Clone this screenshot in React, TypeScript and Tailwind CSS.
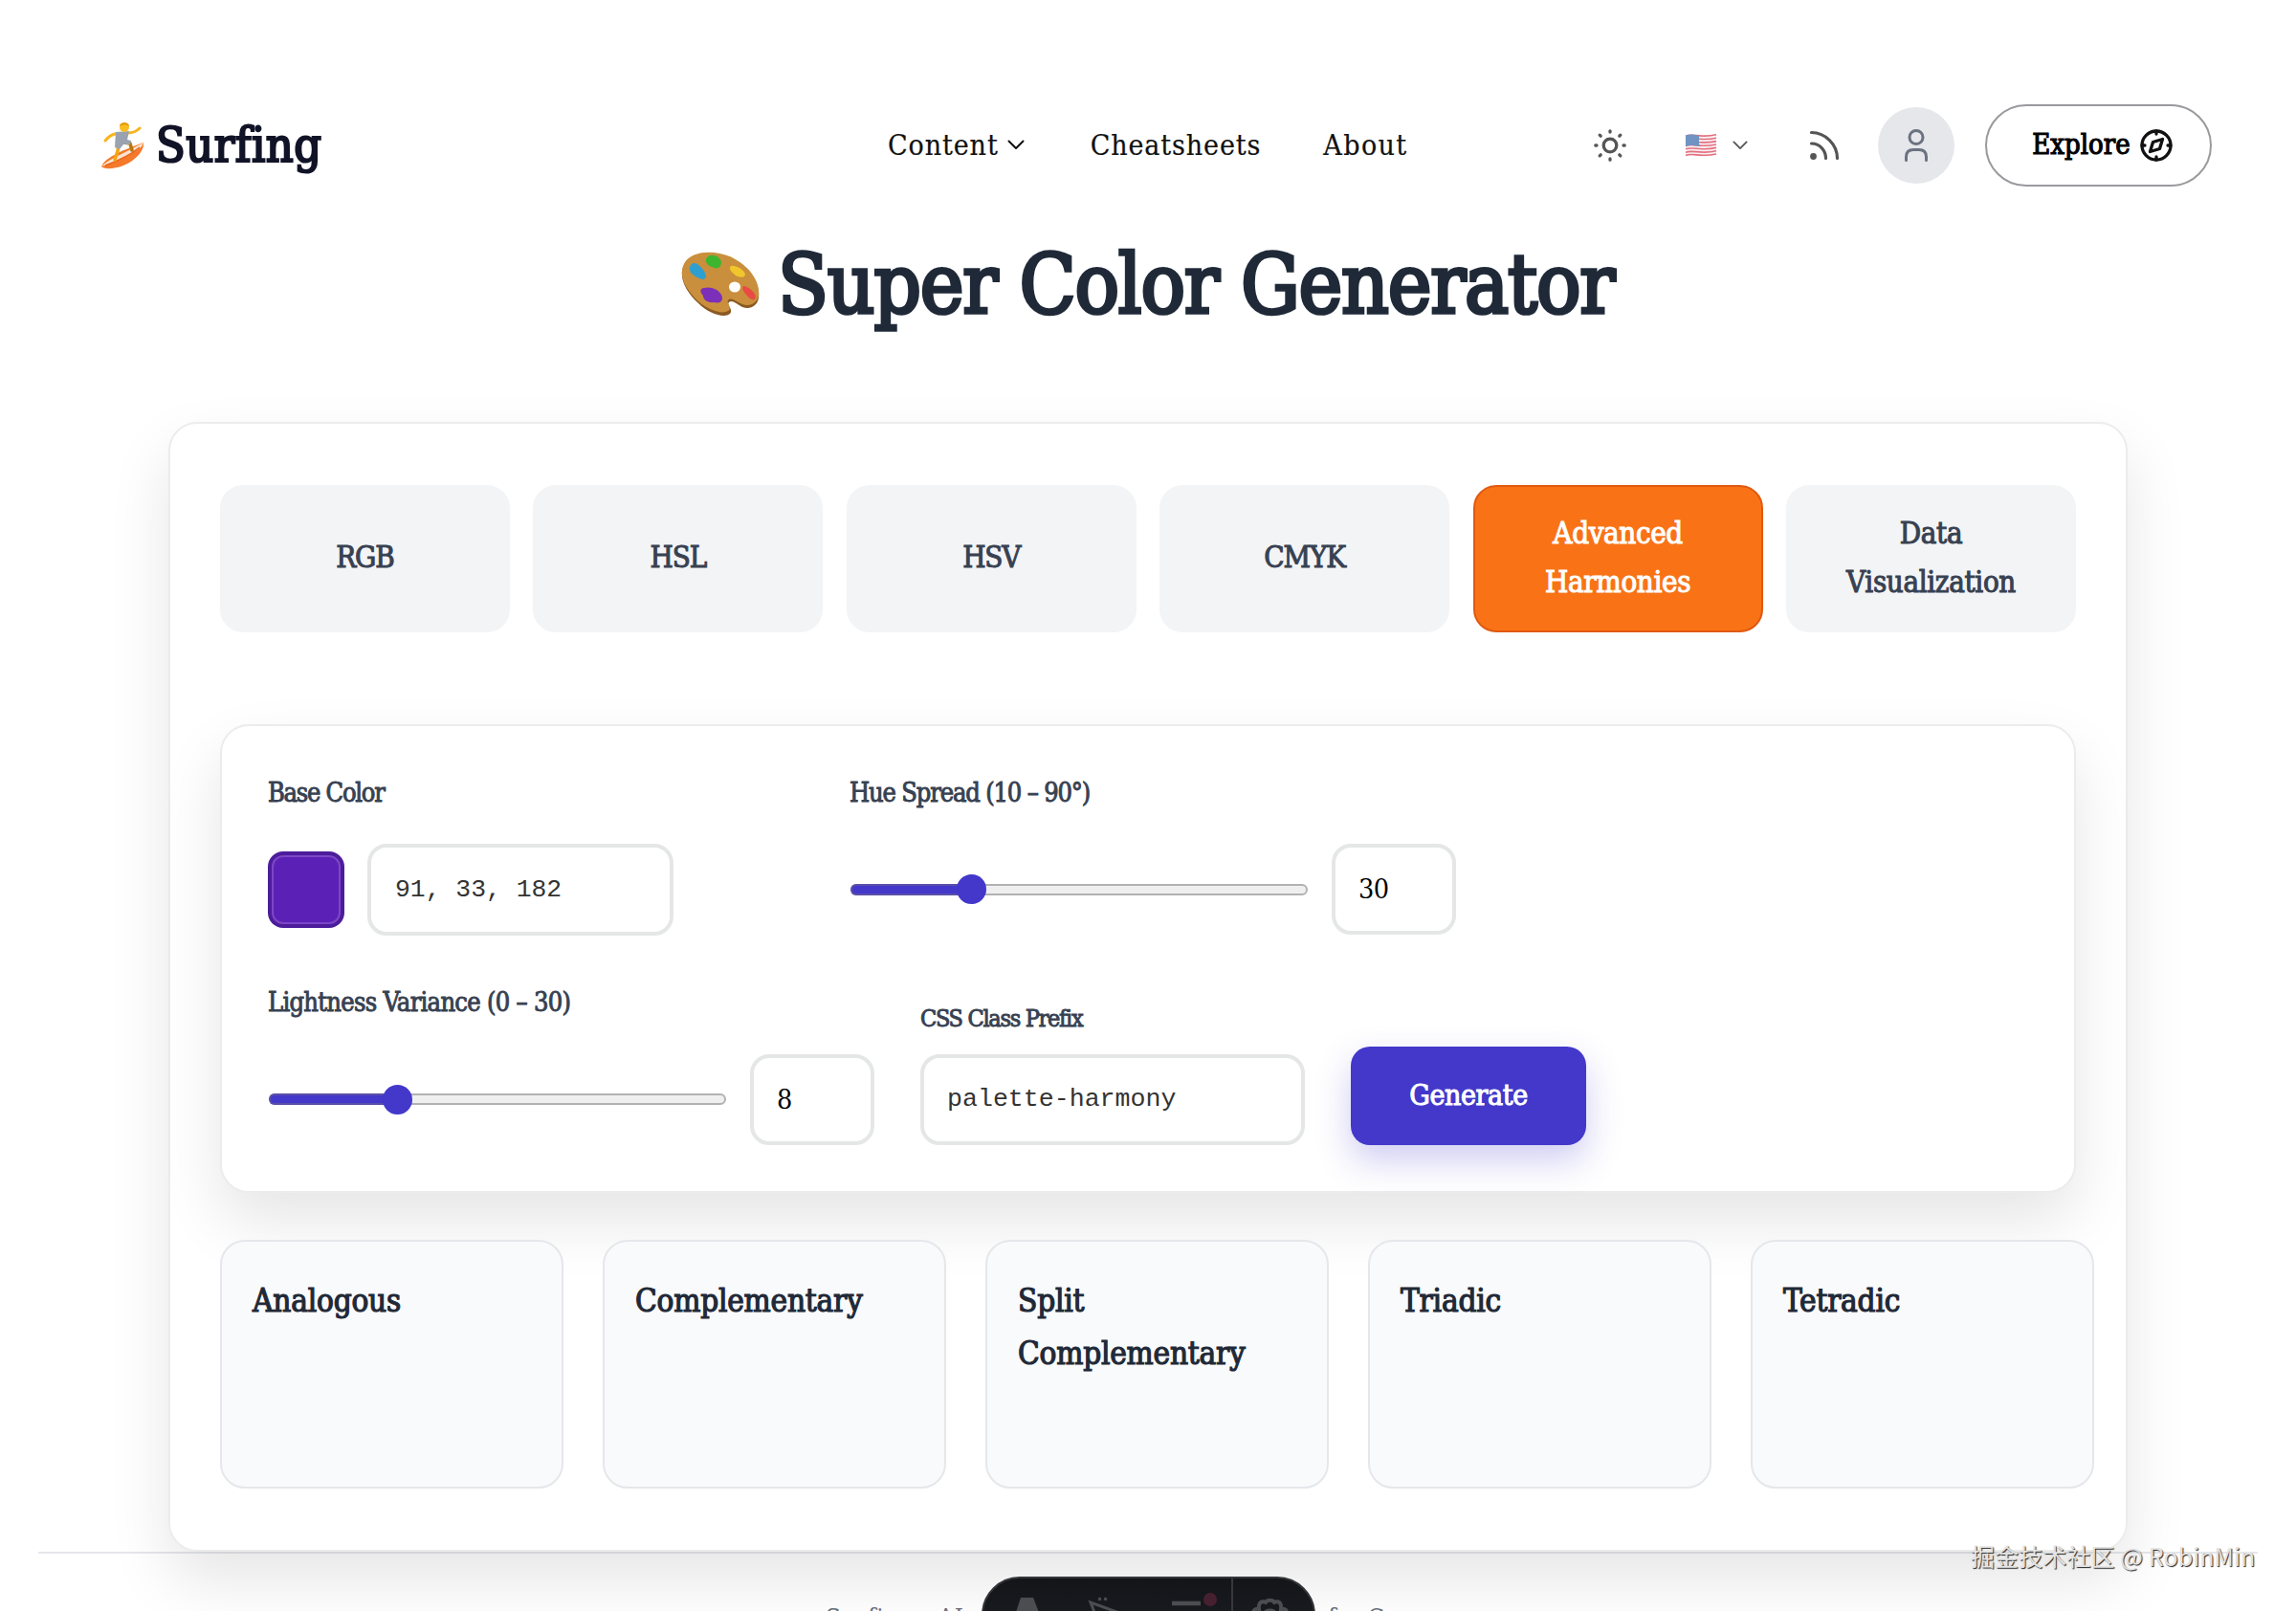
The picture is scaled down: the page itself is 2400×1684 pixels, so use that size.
import React, { useState } from 'react';

type SliderProps = {
    value: number;
    min: number;
    max: number;
};

type NumberBoxProps = {
    value: number;
    onChange: (value: number) => void;
};

const tabs = ['RGB', 'HSL', 'HSV', 'CMYK', 'Advanced Harmonies', 'Data Visualization'];

const harmonies = ['Analogous', 'Complementary', 'Split Complementary', 'Triadic', 'Tetradic'];

// Surfer logo
const SurferIcon = () => (
    <svg viewBox="0 0 46 50" className="w-[46px] h-[50px]">
        <path d="M1 47C5 37 26 29 45 22C46 31 36 41 24 46C14 50 3 50 1 47Z" fill="#f5792a" />
        <path d="M1 47C10 38 28 32 45 22C44 25 42 28 38 30C26 38 13 43 1 47Z" fill="#fbe3cf" />
        <path d="M5 46C16 42 30 36 41 27" stroke="#e8641b" strokeWidth="1.6" fill="none" />
        <path d="M18 12.5C12 13 9 15 5 20" stroke="#f7b51c" strokeWidth="3" strokeLinecap="round" fill="none" />
        <path d="M29 12C34 12 37 11 41 7" stroke="#f7b51c" strokeWidth="3" strokeLinecap="round" fill="none" />
        <path d="M19 24L18 31L15 40" stroke="#f3a712" strokeWidth="3.6" strokeLinecap="round" fill="none" />
        <path d="M24 22L31 23L33 30" stroke="#b9770d" strokeWidth="3.6" strokeLinecap="round" fill="none" />
        <path d="M16 11L30 10L28 19L32 20L31 24L24 24L20 29L15 27Z" fill="#9aa2af" />
        <circle cx="25" cy="6" r="5" fill="#f9bd22" />
        <path d="M20 5C20 0 30 0 30 5C27 3 23 3 20 5Z" fill="#e59b0b" />
    </svg>
);

// Painter palette in front of the title
const PaletteIcon = () => (
    <svg viewBox="0 0 83 68" className="w-[83px] h-[68px]">
        <path
            d="M5 12C13 0 36 -1 54 8C72 17 84 33 82 48C81 57 73 61 65 58C59 55 54 50 51 53C48 56 56 60 52 65C46 70 30 65 19 54C5 41 -3 25 5 12Z"
            fill="#8a5a22"
        />
        <path
            d="M5 11C13 -1 36 -2 54 6C72 15 84 31 82 46C80 54 73 58 65 55C58 52 53 47 50 51C48 54 55 59 50 62C44 66 29 61 19 52C5 39 -3 24 5 11Z"
            fill="#c98f3c"
        />
        <ellipse cx="57" cy="37" rx="6" ry="5.5" fill="#fff" />
        <path d="M11 14C15 9 20 14 24 19C30 27 26 31 20 28C13 25 7 20 11 14Z" fill="#2f9fd0" />
        <path d="M28 6C33 1 42 5 43 11C43 17 38 19 33 16C28 14 25 10 28 6Z" fill="#3db52f" />
        <path d="M53 15C58 14 67 19 68 24C67 28 62 27 58 25C54 22 50 18 53 15Z" fill="#f1c62c" />
        <path d="M66 36C71 36 79 43 79 48C77 53 72 49 69 45C66 42 64 38 66 36Z" fill="#e94b43" />
        <path d="M25 38C31 36 40 39 43 45C46 51 42 55 36 53C28 54 24 50 24 46C20 42 21 38 25 38Z" fill="#7c2fb8" />
    </svg>
);

const FlagIcon = () => (
    <svg viewBox="0 0 34 24" className="w-[34px] h-[24px] opacity-75">
        <path d="M1 2C9 -1 16 5 33 1V21C22 26 12 19 1 23Z" fill="#f6eef0" />
        {[2.2, 5.6, 9, 12.4, 15.8, 19.2, 22.4].map((y) => (
            <path
                key={y}
                d={`M1 ${y}C9 ${y - 3} 16 ${y + 2.4} 33 ${y - 1.4}`}
                stroke="#dd3f55"
                strokeWidth="1.6"
                fill="none"
            />
        ))}
        <path d="M1 1.6C6 -.2 10 .8 15 2V13C10 12 6 11.4 1 13Z" fill="#3f6fae" />
    </svg>
);

const SunIcon = () => (
    <svg viewBox="0 0 34 34" className="w-[34px] h-[34px]" fill="none" stroke="#555" strokeWidth="3.3" strokeLinecap="round">
        <circle cx="17" cy="17" r="6.8" />
        <path d="M17 1.8V3M17 31V32.2M1.8 17H3M31 17H32.2M6.2 6.2L7.2 7.2M26.8 26.8L27.8 27.8M27.8 6.2L26.8 7.2M7.2 26.8L6.2 27.8" />
    </svg>
);

const Chevron = ({ className }: { className: string }) => (
    <svg viewBox="0 0 18 11" className={className} fill="none" stroke="currentColor" strokeWidth="2" strokeLinecap="round" strokeLinejoin="round">
        <path d="M1.5 1.5L9 9L16.5 1.5" />
    </svg>
);

const RssIcon = () => (
    <svg viewBox="0 0 32 32" className="w-[32px] h-[32px]" fill="none" stroke="#555" strokeWidth="3.2" strokeLinecap="round">
        <path d="M2.5 2.5C17 2.5 29.5 15 29.5 29.5" />
        <path d="M2.5 14C11 14 17.5 21 17.5 29.5" />
        <circle cx="4.5" cy="27.5" r="3.4" fill="#555" stroke="none" />
    </svg>
);

const UserIcon = () => (
    <svg viewBox="0 0 26 36" className="w-[26px] h-[36px]" fill="none" stroke="#6b7280" strokeWidth="3" strokeLinecap="round">
        <circle cx="13" cy="9.5" r="7" />
        <path d="M2.5 33.5V30C2.5 25 5.5 22.5 10 22.5H16C20.5 22.5 23.5 25 23.5 30V33.5" />
    </svg>
);

const CompassIcon = () => (
    <svg viewBox="0 0 36 36" className="w-[36px] h-[36px]" fill="none" stroke="#111" strokeWidth="3.3" strokeLinecap="round" strokeLinejoin="round">
        <circle cx="18" cy="18" r="15" />
        <path d="M24.5 11.5L21.5 21.5L11.5 24.5L14.5 14.5Z" />
        <path d="M18 3V6M18 30V33M3 18H6M30 18H33" />
    </svg>
);

const Slider: React.FC<SliderProps> = ({ value, min, max }) => {
    const ratio = (value - min) / (max - min);
    // The thumb stays inside the track, so its travel is track width minus thumb width
    const left = ratio * 449;

    return (
        <div className="relative flex items-center w-[480px] h-[31px]">
            <div className="w-full mx-px h-3 rounded-full border-2 border-[#b2b2b2] bg-[#efefef]" />
            <div
                className="absolute left-px h-3 rounded-l-full border-2 border-r-0 border-[#5a4fa8] bg-[#4338ca]"
                style={{ width: left + 12 }}
            />
            <div className="absolute size-[31px] rounded-full bg-[#4338ca]" style={{ left }} />
        </div>
    );
};

const NumberBox: React.FC<NumberBoxProps> = ({ value, onChange }) => (
    <input
        className="w-[130px] h-[95px] border-4 border-[#e5e7e7] rounded-[20px] pl-6 text-[28.5px] tracking-[-0.5px] text-black bg-white"
        value={value}
        onChange={(e) => onChange(Number(e.target.value))}
    />
);

const App: React.FC = () => {
    const [activeTab, setActiveTab] = useState('Advanced Harmonies');
    const [rgb, setRgb] = useState('91, 33, 182');
    const [prefix, setPrefix] = useState('palette-harmony');
    const [spread, setSpread] = useState(30);
    const [variance, setVariance] = useState(8);

    return (
        <div className="relative w-[2400px] h-[1684px] overflow-hidden bg-white font-['DejaVu_Serif_Condensed','DejaVu_Serif',serif] text-black">
            {/* Header */}
            <header className="flex items-center h-[86px] mt-[109px] pl-[105px]">
                <div className="flex items-center w-[823px]">
                    <SurferIcon />
                    <span className="ml-[12px] pb-px text-[50px] leading-none tracking-[0.5px] text-[#111327] [-webkit-text-stroke:2.2px_#111327]">
                        Surfing
                    </span>
                </div>
                <nav className="flex items-center w-[738px] pb-px text-[30px] tracking-[0.9px] text-[#111] [-webkit-text-stroke:0.2px_#111]">
                    <span>Content</span>
                    <Chevron className="w-[18px] h-[11px] ml-[9px] mr-[69px]" />
                    <span className="mr-[65px]">Cheatsheets</span>
                    <span className="tracking-[1.4px]">About</span>
                </nav>
                <SunIcon />
                <div className="flex items-center ml-[61px] w-[130px] text-[#555]">
                    <FlagIcon />
                    <Chevron className="w-[16px] h-[10px] ml-[16px]" />
                </div>
                <RssIcon />
                <div className="flex items-center justify-center ml-[40px] size-20 rounded-full bg-[#e5e7eb]">
                    <UserIcon />
                </div>
                <button className="flex items-center justify-center gap-[9px] ml-8 pl-[9px] w-[237px] h-[86px] rounded-full border-2 border-[#9a9a9e] bg-white">
                    <span className="text-[29px] [-webkit-text-stroke:1.1px_#000]">Explore</span>
                    <CompassIcon />
                </button>
            </header>

            <h1 className="flex items-center h-[104px] mt-[50px] pl-[711px] text-[86px] leading-none tracking-[-1.2px] text-[#1f2937] [-webkit-text-stroke:3.6px_#1f2937]">
                <PaletteIcon />
                <span className="ml-[19px] pb-px">Super Color Generator</span>
            </h1>

            {/* Generator card */}
            <main className="relative z-10 w-[2048px] h-[1181px] ml-[176px] mt-[92px] pt-[63.5px] px-[52px] rounded-[30px] border-2 border-[#ececed] bg-white shadow-[0_30px_64px_rgba(0,0,0,0.1)]">
                <div className="grid grid-cols-6 gap-[24.5px]">
                    {tabs.map((tab) => (
                        <button
                            key={tab}
                            onClick={() => setActiveTab(tab)}
                            className={`h-[154px] px-8 pb-[2px] rounded-[24px] border-2 text-[31px] leading-[51px] ${
                                tab.length > 4 ? 'tracking-[-0.35px]' : 'tracking-[-1.1px]'
                            } ${
                                tab === activeTab
                                    ? 'bg-[#f97316] border-[#e0590f] text-white [-webkit-text-stroke:1px_#fff]'
                                    : 'bg-[#f3f4f6] border-[#f3f4f6] text-[#374151] [-webkit-text-stroke:1px_#374151]'
                            }`}
                        >
                            {tab}
                        </button>
                    ))}
                </div>

                {/* Controls */}
                <section className="flex flex-col gap-[48px] h-[490px] mt-[96px] pt-[48px] pl-[48px] rounded-[30px] border-2 border-[#ececed] bg-white shadow-[0_30px_64px_rgba(0,0,0,0.1)]">
                    <div className="flex">
                        <div className="w-[608px]">
                            <label className="block h-[44px] leading-[44px] text-[27px] tracking-[-1.25px] text-[#374151] [-webkit-text-stroke:0.9px_#374151]">
                                Base Color
                            </label>
                            <div className="flex items-center gap-6 mt-[31px]">
                                <div className="size-20 p-1 rounded-[16px] bg-[#4c1d9b]">
                                    <div className="size-full rounded-[12px] border-2 border-[#7c46c6] bg-[#5b21b6]" />
                                </div>
                                <input
                                    className="w-[320px] h-24 pl-[25px] border-4 border-[#e5e7e7] rounded-[20px] font-['Liberation_Mono',monospace] text-[26.4px] text-[#333] bg-white"
                                    value={rgb}
                                    onChange={(e) => setRgb(e.target.value)}
                                />
                            </div>
                        </div>
                        <div>
                            <label className="block h-[44px] leading-[44px] text-[27px] tracking-[-1.15px] text-[#374151] [-webkit-text-stroke:0.9px_#374151]">
                                Hue Spread (10 – 90°)
                            </label>
                            <div className="flex items-center gap-6 h-24 mt-[31px]">
                                <Slider value={spread} min={10} max={90} />
                                <NumberBox value={spread} onChange={setSpread} />
                            </div>
                        </div>
                    </div>

                    <div className="flex items-end">
                        <div className="mr-[48px]">
                            <label className="block h-[44px] leading-[44px] text-[27px] tracking-[-0.7px] text-[#374151] [-webkit-text-stroke:0.9px_#374151]">
                                Lightness Variance (0 – 30)
                            </label>
                            <div className="flex items-center gap-6 mt-8">
                                <Slider value={variance} min={0} max={30} />
                                <NumberBox value={variance} onChange={setVariance} />
                            </div>
                        </div>
                        <div className="mr-[48px]">
                            <label className="block h-[44px] leading-[44px] text-[25px] tracking-[-1.3px] text-[#374151] [-webkit-text-stroke:0.9px_#374151]">
                                CSS Class Prefix
                            </label>
                            <input
                                className="block w-[402px] h-[95px] mt-[15px] pl-[24px] border-4 border-[#e5e7e7] rounded-[20px] font-['Liberation_Mono',monospace] text-[26.6px] text-[#333] bg-white"
                                value={prefix}
                                onChange={(e) => setPrefix(e.target.value)}
                            />
                        </div>
                        <button className="w-[246px] h-[103px] pb-px rounded-[20px] bg-[#4338ca] text-white text-[30px] tracking-[-0.4px] [-webkit-text-stroke:1px_#fff] shadow-[0_16px_36px_rgba(67,56,202,0.25)]">
                            Generate
                        </button>
                    </div>
                </section>

                {/* Harmony results, the row runs past the padding on the right */}
                <div className="flex gap-[41px] mt-[49px]">
                    {harmonies.map((name) => (
                        <div
                            key={name}
                            className="shrink-0 w-[359px] h-[260px] pt-[34px] pl-8 pr-[28px] rounded-[26px] border-2 border-[#e5e7eb] bg-[#f9fafb] text-[33px] leading-[55px] tracking-[-0.2px] text-[#1f2937] [-webkit-text-stroke:1.2px_#1f2937]"
                        >
                            {name}
                        </div>
                    ))}
                </div>
            </main>

            {/* Footer */}
            <footer className="mx-10 border-t-2 border-[#e5e7eb] pt-[50px]">
                <div className="flex text-[26px] leading-[34px] text-[#6b7280] pl-[823px]">
                    <span className="w-[525px] tracking-[0.6px]">Surfing - AI</span>
                    <span>for C</span>
                </div>
            </footer>

            {/* Dev toolbar */}
            <div className="absolute z-20 left-[1026px] top-[1648px] flex w-[349px] h-[80px] rounded-full border-2 border-[#343539] bg-linear-to-b from-[#131519] to-[#1d1f24]">
                <svg viewBox="0 0 345 38" className="w-[345px] h-[38px]" fill="none" stroke="#4c4d51" strokeWidth="3">
                    <path d="M33 38L39 20H52L59 38Z" fill="#4c4d51" stroke="none" />
                    <path d="M117 38L112 25L142 36M121 20L122 23M128 20L127 23" />
                    <path d="M197 26H227" strokeWidth="4.5" />
                    <circle cx="237" cy="22" r="7" fill="#47202f" stroke="none" />
                    <path d="M260 0V38" stroke="#37383c" strokeWidth="2" />
                    <path d="M282 38C281 33 285 31 288 32C287 25 291 23 295 25C297 22 302 22 304 25C308 23 312 25 311 32C315 31 318 33 317 38M293 38C294 32 305 32 306 38" strokeWidth="4" />
                </svg>
            </div>

            {/* Watermark */}
            <div className="absolute z-30 left-[2060px] top-[1607px] text-[25px] leading-[38px] tracking-[0.1px] whitespace-nowrap font-['Noto_Sans_CJK_SC',sans-serif] text-[#e4e4e4] [text-shadow:1px_1px_1px_#222]">
                掘金技术社区 @ RobinMin
            </div>
        </div>
    );
};

export default App;
